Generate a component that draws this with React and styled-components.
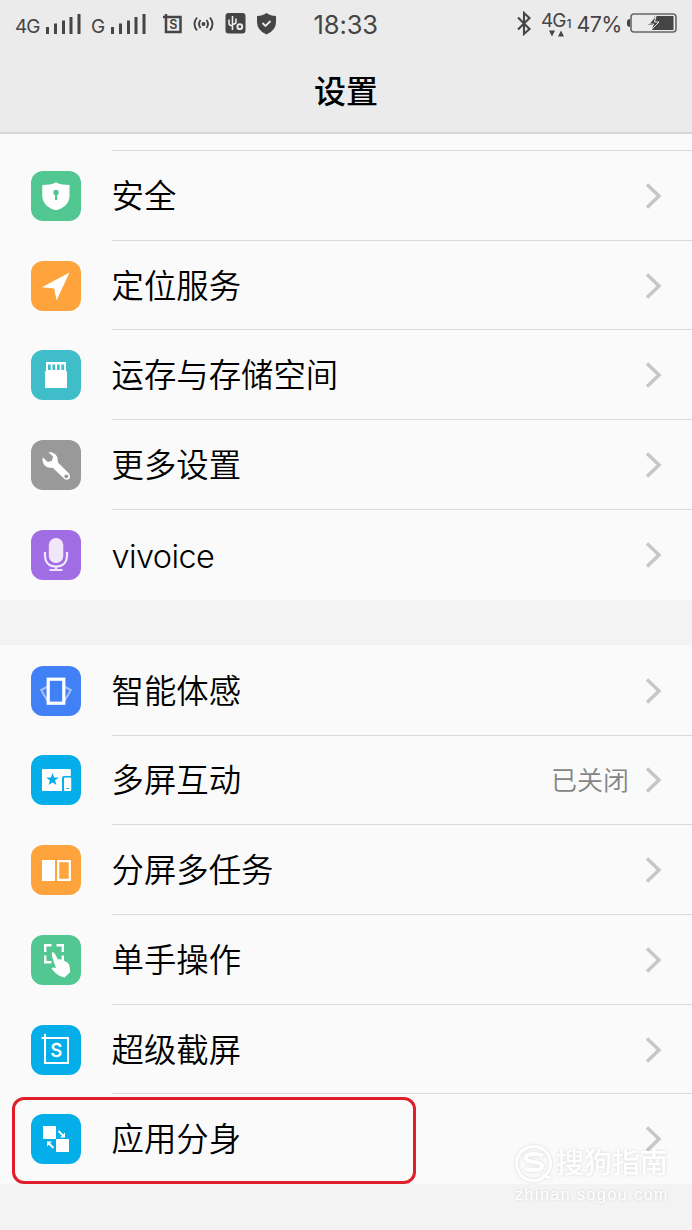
import React from "react";
import styled, { createGlobalStyle } from "styled-components";

const Global = createGlobalStyle`
  * { box-sizing: border-box; }
  body { margin: 0; background: #f3f3f3; }
  svg { display: block; flex: none; }
`;

const latin = `Inter, Roboto, "Liberation Sans", "Noto Sans CJK SC", sans-serif`;
const cjk = `"Noto Sans CJK SC", "Noto Sans", sans-serif`;

const Screen = styled.main`
  position: relative;
  width: 692px;
  height: 1230px;
  overflow: hidden;
  background: #f3f3f3;
  color: #000;
  font-family: ${cjk};
`;

const Header = styled.header`
  height: 134px;
  background: #ebebeb;
  border-bottom: 2px solid #d6d6d6;
`;

const StatusBar = styled.div`
  display: flex;
  align-items: center;
  height: 48px;
  padding-left: 15px;
  color: #454545;
  font-family: ${latin};
`;

const StatusText = styled.span`
  flex: none;
  width: ${(p) => p.$w}px;
  margin-left: ${(p) => p.$gap || 0}px;
  margin-top: ${(p) => p.$drop || 0}px;
  font-size: ${(p) => p.$size}px;
  letter-spacing: ${(p) => p.$track || 0}px;
  line-height: 30px;
  white-space: nowrap;
`;

const StatusIcon = styled.svg`
  margin-left: ${(p) => p.$gap}px;
`;

const Title = styled.h1`
  margin: 18px 0 0;
  text-align: center;
  font-size: 32px;
  font-weight: 500;
  line-height: 46px;
`;

const Group = styled.section`
  background: #fafafa;
  padding: ${(p) => p.$pad};
  margin-bottom: 45px;
`;

const Row = styled.div`
  display: flex;
  align-items: center;
  height: 89.7px;
  padding-left: 31px;
`;

const Tile = styled.span`
  flex: none;
  display: block;
  width: 50px;
  height: 50px;
  margin-top: 2px;
  border-radius: 12px;
  background: ${(p) => p.$color};
`;

const RowBody = styled.div`
  flex: 1;
  display: flex;
  align-items: center;
  height: 100%;
  margin-left: 30.5px;
  padding-right: 30px;
  border-top: 1px solid ${(p) => (p.$line ? "#d9d9d9" : "transparent")};
`;

const Label = styled.span`
  flex: 1;
  font-family: ${(p) => (p.$latin ? latin : cjk)};
  font-size: ${(p) => (p.$latin ? 32.5 : 32.4)}px;
  font-weight: ${(p) => (p.$latin ? 350 : 350)};
  letter-spacing: ${(p) => (p.$latin ? -0.6 : 0)}px;
  line-height: 46px;
  padding-top: ${(p) => (p.$latin ? 5 : 0)}px;
  padding-bottom: ${(p) => (p.$latin ? 0 : 3)}px;
`;

const Value = styled.span`
  margin-right: 16px;
  padding-bottom: 2px;
  color: #858585;
  font-size: 26px;
  font-weight: 350;
  line-height: 40px;
`;

const Arrow = styled.svg`
  margin-top: 1px;
`;

const Highlight = styled.div`
  position: absolute;
  left: 12px;
  top: 1097px;
  width: 404px;
  height: 87px;
  border: 3px solid #e01f2b;
  border-radius: 12px;
`;

const Watermark = styled.div`
  position: absolute;
  left: 514px;
  top: 1142px;
  width: 160px;
  color: #fff;
  filter: drop-shadow(0 0 1.5px rgba(0, 0, 0, 0.14));
`;

const Brand = styled.div`
  display: flex;
  align-items: center;
  gap: 2px;
  font-size: 28px;
  font-weight: 500;
  line-height: 40px;
  white-space: nowrap;
`;

const BrandName = styled.span`
  margin-top: -2px;
`;

const Site = styled.div`
  margin: 3px 0 0 1px;
  font-family: "Liberation Sans", sans-serif;
  font-size: 16px;
  letter-spacing: 1.5px;
  line-height: 20px;
  white-space: nowrap;
`;

const Signal = ({ gap }) => (
  <StatusIcon $gap={gap} width="36" height="22" fill="currentColor">
    <path d="M0 14h3v7H0zM8 10.500h3V21H8zM16 7.500h3V21h-3zM23.500 4h3v17h-3zM31.500 1h3v20h-3z" />
  </StatusIcon>
);

const Chevron = () => (
  <Arrow width="17" height="28" viewBox="0 0 17 28">
    <path d="M2 2.500L14 14 2 25.500" fill="none" stroke="#c7c7c7" strokeWidth="3.500" />
  </Arrow>
);

const glyphs = {
  shield: (
    <>
      <path d="M25 11.300C29 13.700 33.500 14 38.500 14V25C38.500 33 32 37.500 25 39.300C18 37.500 11.300 33 11.300 25V14C16.500 14 21 13.700 25 11.300Z" fill="#fff" />
      <circle cx="25" cy="21.500" r="2.700" fill="#52c791" />
      <path d="M24 22h2.200v7H24z" fill="#52c791" />
    </>
  ),
  location: <path d="M38.500 11.500L25.500 39.500 23.300 27.500 11 26.300Z" fill="#fff" />,
  card: (
    <>
      <path d="M15 12h20v8.500l1 1.500v16H14V22l1-1.500z" fill="#fff" />
      <path d="M17 14.500h2.700V20H17zM21.500 14.500h2.700V20h-2.700zM26 14.500h2.700V20H26zM30.400 14.500h2.700V20h-2.700z" fill="#3fbdc8" />
    </>
  ),
  wrench: (
    <>
      <path d="M17.500 12.500C21 11.500 26 14 26.500 18.500L27 22.500L38 33.500Q40 37 38 39Q36 40.500 33.500 39L22 28L17.500 27.500C13 26.500 10.500 21.500 11.800 17.300L16.800 22L21 20.800L22 16.500Z" fill="#fff" />
      <circle cx="35.300" cy="36.300" r="1.900" fill="#999" />
    </>
  ),
  mic: (
    <>
      <rect x="17.800" y="8" width="14.500" height="25" rx="7.200" fill="#f0e7fb" />
      <path d="M14 22v3.500c0 7 4.500 11 11 11s11-4 11-11V22M25 36.500V40M18.500 40h13" fill="none" stroke="#f0e7fb" strokeWidth="2.200" />
    </>
  ),
  motion: (
    <>
      <path d="M16 21l-5.800 3L16.500 35M34 21l5.800 3L33.500 35" fill="none" stroke="#a4c0fb" strokeWidth="2" />
      <rect x="17.200" y="13.200" width="15.600" height="24" fill="#4280f6" stroke="#fff" strokeWidth="3.200" />
    </>
  ),
  cast: (
    <>
      <path d="M12 14h27q.800 0 .800.800V21H33q-2 0-2 2v13H12q-1 0-1-1V15q0-1 1-1z" fill="#fff" />
      <path d="M21.500 18l1.600 4.400 4.700.200-3.700 2.900 1.300 4.500-3.900-2.600-3.900 2.600 1.300-4.500-3.700-2.900 4.700-.200z" fill="#04aee9" />
      <rect x="33" y="22.500" width="7.200" height="13.500" rx="1" fill="#fff" />
      <path d="M35.500 33h2.500v1h-2.500z" fill="#04aee9" />
    </>
  ),
  split: (
    <>
      <path d="M11 15h13v21H11z" fill="#fff" />
      <path d="M27.200 16.200h11.600v18.600H27.200z" fill="none" stroke="#fff" strokeWidth="2.200" />
    </>
  ),
  hand: (
    <>
      <path d="M14.200 17V10.200h6.300M25.500 10.200h6.300V17M14.200 20.500v6.700h6.300M31.800 20.500v4.500" fill="none" stroke="#fff" strokeWidth="2.400" />
      <path d="M21 17.500Q23 16.800 24 19L27 24.500Q31 23.500 34.500 26.500Q38 28 38.500 31L39.300 37L33.500 42.500Q28 41.500 24.500 38L20.500 33.800Q21.500 31.800 25 33L22.500 26Q20.300 20 21 17.500Z" fill="#fff" />
    </>
  ),
  capture: (
    <>
      <path d="M14 9v29h23V13H10.500" fill="none" stroke="#fff" strokeWidth="2" />
      <text x="25.300" y="32" textAnchor="middle" fill="#fff" stroke="#fff" strokeWidth=".3" fontFamily="Inter, sans-serif" fontSize="18" fontWeight="500">S</text>
    </>
  ),
  clone: (
    <>
      <path d="M12 12h13v13H12zM25 25h13v13H25z" fill="#fff" />
      <path d="M27.500 17l4.500 4.500M22.500 34L18 29.500" stroke="#fff" strokeWidth="1.800" />
      <path d="M34 23.500v-5l-5 5zM16 27.500v5l5-5z" fill="#fff" />
    </>
  ),
};

const first = [
  ["安全", "shield", "#52c791"],
  ["定位服务", "location", "#ffa33c"],
  ["运存与存储空间", "card", "#3fbdc8"],
  ["更多设置", "wrench", "#999"],
  ["vivoice", "mic", "#a06de5"],
];
const second = [
  ["智能体感", "motion", "#4280f6"],
  ["多屏互动", "cast", "#04aee9", "已关闭"],
  ["分屏多任务", "split", "#ffa33c"],
  ["单手操作", "hand", "#52c791"],
  ["超级截屏", "capture", "#04aee9"],
  ["应用分身", "clone", "#04aee9"],
];

const SettingRow = ({ item: [label, glyph, color, value], line }) => (
  <Row>
    <Tile $color={color}>
      <svg width="50" height="50" viewBox="0 0 50 50">{glyphs[glyph]}</svg>
    </Tile>
    <RowBody $line={line}>
      <Label $latin={label === "vivoice"}>{label}</Label>
      {value && <Value>{value}</Value>}
      <Chevron />
    </RowBody>
  </Row>
);

export default function App() {
  return (
    <Screen>
      <Global />
      <Header>
        <StatusBar>
          <StatusText $w={25} $size={19} $drop={6} $track={-0.9}>4G</StatusText>
          <Signal gap={6} />
          <StatusText $w={14} $gap={9} $size={19} $drop={6}>G</StatusText>
          <Signal gap={6} />
          <StatusIcon $gap={15} width="21" height="22" fill="none" stroke="currentColor">
            <path d="M4 1v18h14.500V4H1" strokeWidth="2.500" />
            <text x="11.300" y="16" textAnchor="middle" stroke="none" fill="currentColor" fontSize="12.500" fontWeight="600">S</text>
          </StatusIcon>
          <StatusIcon $gap={10} width="21" height="18" fill="none" stroke="currentColor" strokeWidth="1.900">
            <path d="M4 2.500Q-1 9 4 15.500M7.500 5Q4.500 9 7.500 13M17 2.500Q22 9 17 15.500M13.500 5Q16.500 9 13.500 13" />
            <circle cx="10.500" cy="9" r="2" fill="currentColor" stroke="none" />
          </StatusIcon>
          <StatusIcon $gap={11} width="21" height="22">
            <rect x=".5" y="0" width="20" height="20.500" rx="3" fill="#454545" />
            <g fill="none" stroke="#ebebeb" strokeWidth="1.600">
              <path d="M7.500 3v14M4 6.500v4q0 2 3.500 2.500M11 5.500V9q0 2-3.500 2.500" />
              <circle cx="14.800" cy="13.700" r="2.400" strokeWidth="2" />
            </g>
          </StatusIcon>
          <StatusIcon $gap={10} width="21" height="22">
            <path d="M10.500 0Q14.500 3 20 3V9Q20 17.500 10.500 21.500Q1 17.500 1 9V3Q6.500 3 10.500 0Z" fill="#454545" />
            <path d="M6.500 10l3 3 5-5" fill="none" stroke="#ebebeb" strokeWidth="1.800" />
          </StatusIcon>
          <StatusText $w={66} $gap={36.5} $size={25.5} $drop={1} $track={-0.1}>18:33</StatusText>
          <StatusIcon $gap={136} width="16" height="26" fill="none" stroke="currentColor" strokeWidth="2.100">
            <path d="M2 6.500l11.500 11.500-5.500 5V2L13.500 7 2 18.500" />
          </StatusIcon>
          <StatusIcon $gap={9} width="32" height="28" fill="currentColor">
            <text x="0" y="17" fontSize="19" letterSpacing="-1">4G</text>
            <text x="25.500" y="17.500" fontSize="12" fontWeight="500">1</text>
            <path d="M8 20.500h6L11 26.500zM17 26.500h6l-3-6z" />
          </StatusIcon>
          <StatusText $w={46} $gap={4} $size={21.5} $track={-0.6}>47%</StatusText>
          <StatusIcon $gap={4} width="50" height="22">
            <path d="M3 6Q0 6 0 9v2q0 3 3 3z" fill="#454545" />
            <rect x="4" y="1" width="45" height="18" rx="3" fill="none" stroke="#666" strokeWidth="1.600" />
            <path d="M27.500 3h19v14H25l2.500-5H21l7-6z" fill="#454545" />
            <path d="M29 3l-7 8h4.500L24 17l8-8h-4.500z" fill="#454545" stroke="#ebebeb" strokeWidth="1" />
          </StatusIcon>
        </StatusBar>
        <Title>设置</Title>
      </Header>
      <Group $pad="16px 0 1.5px">
        {first.map((item) => <SettingRow key={item[0]} item={item} line />)}
      </Group>
      <Group $pad="0 0 1px">
        {second.map((item, i) => <SettingRow key={item[0]} item={item} line={i > 0} />)}
      </Group>
      <Highlight />
      <Watermark>
        <Brand>
          <svg width="40" height="40" fill="none" stroke="#fff">
            <path d="M33 32A17 17 0 1 1 36 26Q35 31 30 34L37 36" strokeWidth="2.800" />
            <path d="M29 13.500Q25 12 19 12Q12 12 12 16Q12 19 20 20Q28 21 28 24Q28 28 20 28Q15 28 11 26.500" strokeWidth="4" />
          </svg>
          <BrandName>搜狗指南</BrandName>
        </Brand>
        <Site>zhinan.sogou.com</Site>
      </Watermark>
    </Screen>
  );
}
